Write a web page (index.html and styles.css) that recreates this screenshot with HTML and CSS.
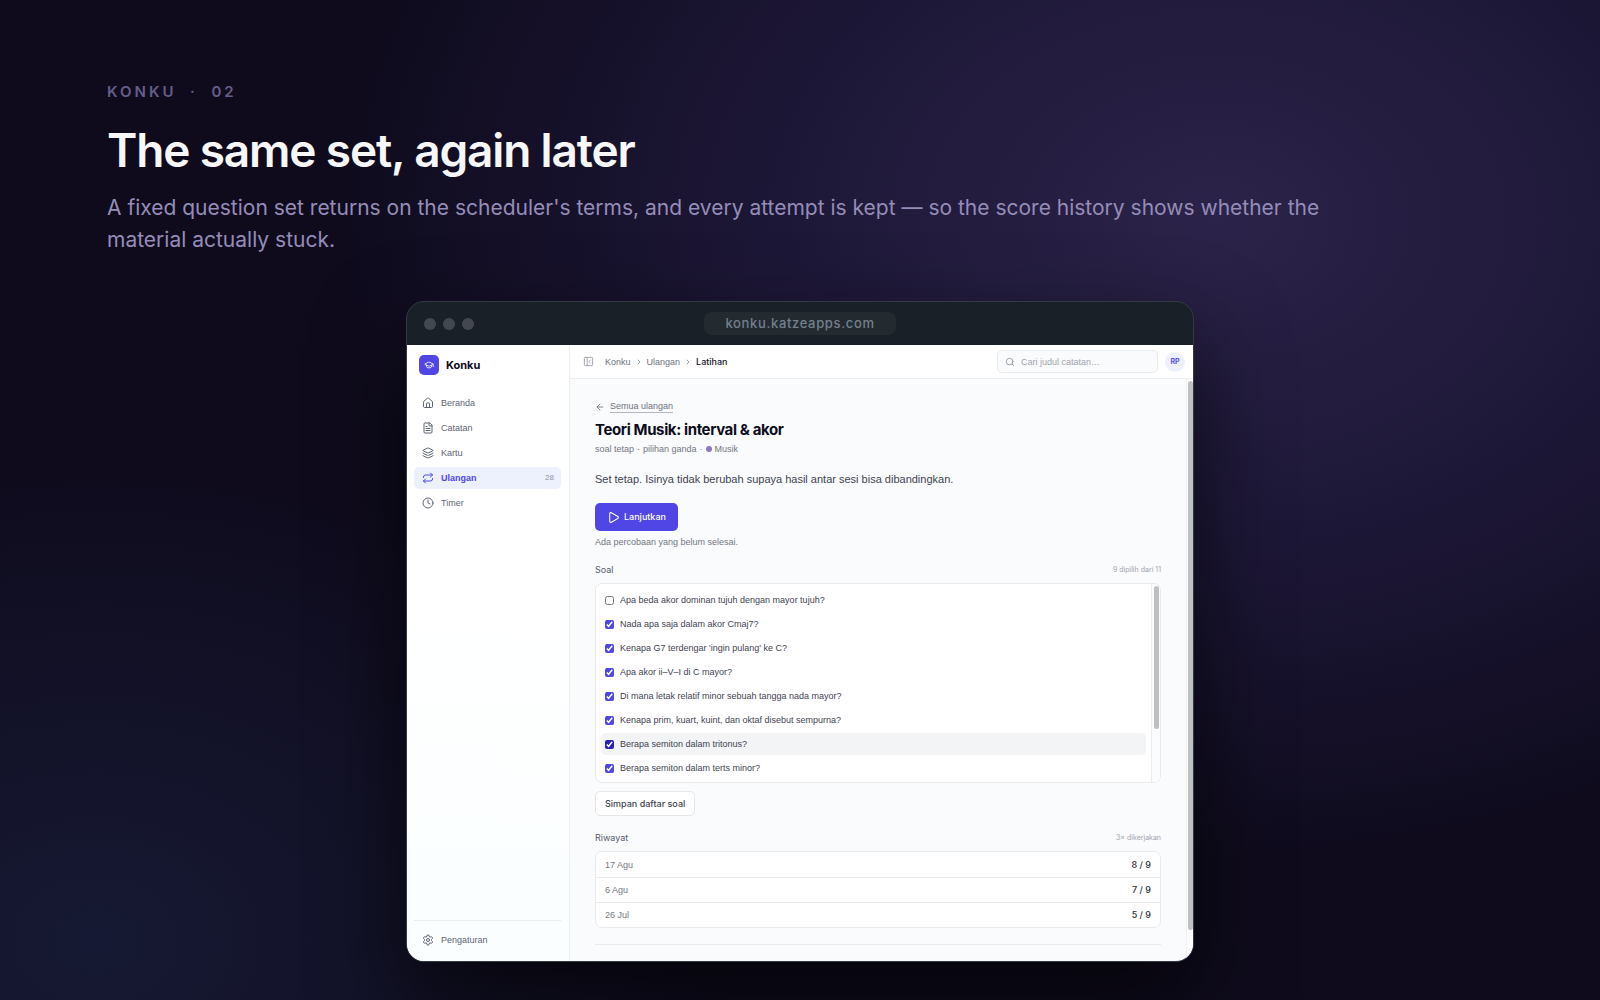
FILE: index.html
```html
<!DOCTYPE html>
<html lang="en">

<head>
    <meta charset="utf-8">
    <title>Konku - The same set, again later</title>
    <link rel="stylesheet" href="styles.css">
</head>

<body>
    <header class="intro">
        <p class="eyebrow">KONKU &nbsp;·&nbsp; 02</p>
        <h1>The same set, again later</h1>
        <p class="lead">A fixed question set returns on the scheduler's terms, and every attempt is kept — so the score history shows whether the material actually stuck.</p>
    </header>

    <div class="window" lang="id">
        <div class="window-bar">
            <div class="dots"><span></span><span></span><span></span></div>
            <div class="address">konku.katzeapps.com</div>
        </div>

        <div class="app">
            <aside class="sidebar">
                <div class="brand">
                    <span class="logo">
                        <svg viewBox="0 0 24 24"><path d="M21.4 10.9a1 1 0 0 0 0-1.8L12.8 5.2a2 2 0 0 0-1.6 0L2.6 9.1a1 1 0 0 0 0 1.8l8.6 3.9a2 2 0 0 0 1.6 0z"/><path d="M22 10v6"/><path d="M6 12.5V16a6 3 0 0 0 12 0v-3.5"/></svg>
                    </span>
                    <strong>Konku</strong>
                </div>
                <nav class="menu">
                    <a href="#">
                        <svg viewBox="0 0 24 24"><path d="M15 21v-8a1 1 0 0 0-1-1h-4a1 1 0 0 0-1 1v8"/><path d="M3 10a2 2 0 0 1 .7-1.5l7-6a2 2 0 0 1 2.6 0l7 6A2 2 0 0 1 21 10v9a2 2 0 0 1-2 2H5a2 2 0 0 1-2-2z"/></svg>
                        Beranda
                    </a>
                    <a href="#">
                        <svg viewBox="0 0 24 24"><path d="M15 2H6a2 2 0 0 0-2 2v16a2 2 0 0 0 2 2h12a2 2 0 0 0 2-2V7z"/><path d="M14 2v4a2 2 0 0 0 2 2h4"/><path d="M10 9H8"/><path d="M16 13H8"/><path d="M16 17H8"/></svg>
                        Catatan
                    </a>
                    <a href="#">
                        <svg viewBox="0 0 24 24"><path d="M12.8 2.2a2 2 0 0 0-1.6 0L2.6 6.1a1 1 0 0 0 0 1.8l8.6 3.9a2 2 0 0 0 1.6 0l8.6-3.9a1 1 0 0 0 0-1.8z"/><path d="M2 12a1 1 0 0 0 .6.9l8.6 3.9a2 2 0 0 0 1.6 0l8.6-3.9a1 1 0 0 0 .6-.9"/><path d="M2 17a1 1 0 0 0 .6.9l8.6 3.9a2 2 0 0 0 1.6 0l8.6-3.9a1 1 0 0 0 .6-.9"/></svg>
                        Kartu
                    </a>
                    <a href="#" class="active">
                        <svg viewBox="0 0 24 24"><path d="m17 2 4 4-4 4"/><path d="M3 11v-1a4 4 0 0 1 4-4h14"/><path d="m7 22-4-4 4-4"/><path d="M21 13v1a4 4 0 0 1-4 4H3"/></svg>
                        Ulangan
                        <span class="count">28</span>
                    </a>
                    <a href="#">
                        <svg viewBox="0 0 24 24"><circle cx="12" cy="12" r="10"/><path d="M12 6v6l4 2"/></svg>
                        Timer
                    </a>
                </nav>
                <div class="menu menu-bottom">
                    <a href="#">
                        <svg viewBox="0 0 24 24"><path d="M9.7 4.1a2.3 2.3 0 0 1 4.6 0 2.3 2.3 0 0 0 3.3 1.9 2.3 2.3 0 0 1 2.3 4 2.3 2.3 0 0 0 0 4 2.3 2.3 0 0 1-2.3 4 2.3 2.3 0 0 0-3.3 1.9 2.3 2.3 0 0 1-4.6 0A2.3 2.3 0 0 0 6.4 18a2.3 2.3 0 0 1-2.3-4 2.3 2.3 0 0 0 0-4 2.3 2.3 0 0 1 2.3-4 2.3 2.3 0 0 0 3.3-1.9"/><circle cx="12" cy="12" r="3"/></svg>
                        Pengaturan
                    </a>
                </div>
            </aside>

            <div class="main">
                <div class="topbar">
                    <button class="toggle" aria-label="Tutup menu">
                        <svg viewBox="0 0 24 24"><rect x="3" y="3" width="18" height="18" rx="2"/><path d="M9 3v18"/><path d="m16 15-3-3 3-3"/></svg>
                    </button>
                    <div class="crumbs">
                        <a href="#">Konku</a>
                        <svg viewBox="0 0 24 24"><path d="m9 18 6-6-6-6"/></svg>
                        <a href="#">Ulangan</a>
                        <svg viewBox="0 0 24 24"><path d="m9 18 6-6-6-6"/></svg>
                        <span>Latihan</span>
                    </div>
                    <label class="search">
                        <svg viewBox="0 0 24 24"><circle cx="11" cy="11" r="8"/><path d="m21 21-4.3-4.3"/></svg>
                        <input type="text" placeholder="Cari judul catatan…" aria-label="Cari judul catatan">
                    </label>
                    <button class="avatar">RP</button>
                </div>

                <div class="scroller">
                    <div class="content">
                        <div class="back">
                            <svg viewBox="0 0 24 24"><path d="m12 19-7-7 7-7"/><path d="M19 12H5"/></svg>
                            <a href="#">Semua ulangan</a>
                        </div>
                        <h2>Teori Musik: interval &amp; akor</h2>
                        <p class="meta">
                            <span>soal tetap</span>
                            <span>·</span>
                            <span>pilihan ganda</span>
                            <span>·</span>
                            <span class="tag">Musik</span>
                        </p>
                        <p class="description">Set tetap. Isinya tidak berubah supaya hasil antar sesi bisa dibandingkan.</p>
                        <button class="primary">
                            <svg viewBox="0 0 24 24"><path d="M5 5a2 2 0 0 1 3-1.7l12 7a2 2 0 0 1 0 3.4l-12 7A2 2 0 0 1 5 19z"/></svg>
                            Lanjutkan
                        </button>
                        <p class="hint">Ada percobaan yang belum selesai.</p>

                        <div class="section-head">
                            <h3>Soal</h3>
                            <span>9 dipilih dari 11</span>
                        </div>
                        <div class="questions">
                            <div class="question-list">
                                <label><input type="checkbox"> Apa beda akor dominan tujuh dengan mayor tujuh?</label>
                                <label><input type="checkbox" checked> Nada apa saja dalam akor Cmaj7?</label>
                                <label><input type="checkbox" checked> Kenapa G7 terdengar 'ingin pulang' ke C?</label>
                                <label><input type="checkbox" checked> Apa akor ii–V–I di C mayor?</label>
                                <label><input type="checkbox" checked> Di mana letak relatif minor sebuah tangga nada mayor?</label>
                                <label><input type="checkbox" checked> Kenapa prim, kuart, kuint, dan oktaf disebut sempurna?</label>
                                <label class="hovered"><input type="checkbox" checked> Berapa semiton dalam tritonus?</label>
                                <label><input type="checkbox" checked> Berapa semiton dalam terts minor?</label>
                            </div>
                            <div class="list-track"><span></span></div>
                        </div>
                        <button class="secondary">Simpan daftar soal</button>

                        <div class="section-head">
                            <h3>Riwayat</h3>
                            <span>3× dikerjakan</span>
                        </div>
                        <table class="history">
                            <tr><td>17 Agu</td><td>8 / 9</td></tr>
                            <tr><td>6 Agu</td><td>7 / 9</td></tr>
                            <tr><td>26 Jul</td><td>5 / 9</td></tr>
                        </table>
                        <hr>
                    </div>
                    <div class="page-track"><span></span></div>
                </div>
            </div>
        </div>
    </div>
</body>

</html>
```
FILE: styles.css
```css
* {
    box-sizing: border-box;
}

body {
    margin: 0;
    min-height: 100vh;
    overflow: hidden;
    font-family: Inter, "Liberation Sans", sans-serif;
    background:
        radial-gradient(ellipse 880px 640px at 76% 22%, #2b2349 0%, #1d1737 50%, transparent 100%),
        radial-gradient(ellipse 640px 480px at 6% 94%, #161933 0%, transparent 100%),
        #0f0b1d;
}

h1,
h2,
h3,
p {
    margin: 0;
}

a {
    color: inherit;
    text-decoration: none;
}

button,
input {
    font: inherit;
    color: inherit;
}

svg {
    flex: none;
    fill: none;
    stroke: currentColor;
    stroke-width: 2;
    stroke-linecap: round;
    stroke-linejoin: round;
}

/* Heading */
.intro {
    padding: 80px 107px 0;
}

.eyebrow {
    font-size: 15px;
    line-height: 24px;
    font-weight: 600;
    letter-spacing: 3px;
    color: #655e88;
}

h1 {
    margin-top: 17px;
    font-size: 46px;
    line-height: 58px;
    font-weight: 600;
    letter-spacing: -0.025em;
    color: #f7f7f9;
}

.lead {
    max-width: 1240px;
    margin-top: 13px;
    font-size: 21px;
    line-height: 32px;
    color: #958db8;
}

/* Browser window */
.window {
    max-width: 788px;
    margin: 45px auto 0;
    border: 1px solid #343a44;
    border-radius: 18px;
    overflow: hidden;
    background: #192027;
    box-shadow: 0 40px 90px rgba(0, 0, 0, 0.65);
}

.window-bar {
    display: grid;
    grid-template-columns: 1fr auto 1fr;
    align-items: center;
    height: 43px;
    padding: 0 17px;
}

.dots {
    display: flex;
    gap: 7px;
}

.dots span {
    width: 12px;
    height: 12px;
    border-radius: 50%;
    background: #434850;
}

.address {
    padding: 0 21px;
    border-radius: 8px;
    font-size: 13px;
    line-height: 23px;
    font-weight: 500;
    letter-spacing: 0.05em;
    color: #74808c;
    background: #232b31;
}

.app {
    display: flex;
    font-family: "Liberation Sans", Inter, sans-serif;
    font-size: 9px;
    line-height: 14px;
    color: #3f4350;
    background: #fafbfc;
}

/* Inter has the medium weights */
.brand,
.crumbs span,
.avatar,
.primary,
.secondary,
.section-head,
.history td:last-child,
h2 {
    font-family: Inter, sans-serif;
}

/* Sidebar */
.sidebar {
    display: flex;
    flex-direction: column;
    width: 163px;
    padding: 10px 8px 10px 7px;
    border-right: 1px solid #eceef0;
    background: linear-gradient(#fff 40%, #fafeff);
}

.brand {
    display: flex;
    align-items: center;
    gap: 7px;
    padding-left: 5px;
    font-size: 11px;
    color: #0c0d1c;
}

.logo {
    display: grid;
    place-items: center;
    width: 20px;
    height: 20px;
    border-radius: 5px;
    color: #fff;
    background: #4f46e5;
}

.logo svg {
    width: 10px;
    height: 10px;
}

.menu {
    display: flex;
    flex-direction: column;
    gap: 3px;
    margin-top: 17px;
    color: #5f6473;
}

.menu a {
    display: flex;
    align-items: center;
    gap: 7px;
    height: 22px;
    padding: 0 7px 0 8px;
    border-radius: 5px;
}

.menu svg {
    width: 12px;
    height: 12px;
}

.menu .active {
    font-weight: 700;
    color: #4f46e5;
    background: #edf1fe;
}

.count {
    margin-left: auto;
    font-size: 8px;
    font-weight: 400;
    color: #8f939f;
}

.menu-bottom {
    margin-top: auto;
    padding-top: 8px;
    border-top: 1px solid #e8eaed;
}

/* Top bar */
.main {
    flex: 1;
    min-width: 0;
}

.topbar {
    display: flex;
    align-items: center;
    height: 34px;
    padding: 0 8px 0 13px;
    border-bottom: 1px solid #eceef0;
    background: #fff;
}

.toggle {
    display: flex;
    padding: 0;
    border: none;
    color: #9a9ea6;
    background: none;
}

.toggle svg {
    width: 11px;
    height: 11px;
}

.crumbs {
    display: flex;
    align-items: center;
    gap: 4px;
    margin-left: 11px;
    color: #6e727d;
}

.crumbs svg {
    width: 8px;
    height: 8px;
}

.crumbs span {
    font-weight: 500;
    color: #14161f;
}

.search {
    display: flex;
    align-items: center;
    gap: 6px;
    width: 161px;
    height: 23px;
    margin-left: auto;
    padding: 0 7px;
    border: 1px solid #e8eaee;
    border-radius: 5px;
    color: #8d919c;
    background: #fafbfc;
}

.search svg {
    width: 10px;
    height: 10px;
}

.search input {
    width: 100%;
    min-width: 0;
    padding: 0;
    border: none;
    outline: none;
    background: none;
}

.search input::placeholder {
    color: #9fa3ad;
}

.avatar {
    width: 20px;
    height: 20px;
    margin-left: 7px;
    padding: 0;
    border: none;
    border-radius: 50%;
    font-size: 7px;
    font-weight: 700;
    color: #5a4fe0;
    background: #eef0fd;
}

/* Page content */
.scroller {
    display: flex;
}

.content {
    flex: 1;
    min-width: 0;
    padding: 21px 25px 16px;
}

.back {
    display: flex;
    align-items: center;
    gap: 5px;
    color: #6e727d;
}

.back svg {
    width: 10px;
    height: 10px;
}

.back a {
    line-height: 12px;
    border-bottom: 1px solid #b4b7bf;
}

h2 {
    margin-top: 7px;
    font-size: 15px;
    line-height: 20px;
    font-weight: 700;
    letter-spacing: -0.025em;
    color: #0c0d1c;
}

.meta {
    display: flex;
    gap: 3px;
    margin-top: 2px;
    color: #737783;
}

.tag {
    display: flex;
    align-items: center;
    gap: 3px;
}

.tag::before {
    content: "";
    width: 6px;
    height: 6px;
    border-radius: 50%;
    background: #8b79bd;
}

.description {
    margin-top: 15px;
    font-size: 11px;
    line-height: 16px;
}

.primary {
    display: flex;
    align-items: center;
    gap: 4px;
    height: 28px;
    margin-top: 16px;
    padding: 0 12px;
    border: none;
    border-radius: 5px;
    font-weight: 500;
    color: #fff;
    background: #4f46e5;
}

.primary svg {
    width: 13px;
    height: 13px;
}

.hint {
    margin-top: 4px;
    color: #737783;
}

.section-head {
    display: flex;
    align-items: center;
    justify-content: space-between;
    margin: 14px 0 6px;
}

.section-head h3 {
    font-size: 9px;
    font-weight: 400;
    color: #565a6c;
}

.section-head span {
    font-size: 7px;
    color: #a0a4ad;
}

.questions {
    display: flex;
    border: 1px solid #e8eaed;
    border-radius: 7px;
    overflow: hidden;
    background: #fff;
}

.question-list {
    flex: 1;
    display: grid;
    gap: 2px;
    padding: 5px 5px 3px;
}

.question-list label {
    display: flex;
    align-items: center;
    gap: 6px;
    height: 22px;
    padding: 0 4px;
    border-radius: 5px;
}

.question-list input {
    width: 9px;
    height: 9px;
    margin: 0;
    accent-color: #4f46e5;
}

.question-list .hovered {
    background: #f3f4f6;
}

.question-list .hovered input {
    accent-color: #2a1fb8;
}

.list-track {
    width: 9px;
    padding: 2px;
    border-left: 1px solid #eceded;
    background: #fcfcfc;
}

.list-track span,
.page-track span {
    display: block;
    border-radius: 3px;
    background: #bfc0c1;
}

.list-track span {
    width: 5px;
    height: 143px;
}

.secondary {
    height: 25px;
    margin: 8px 0 1px;
    padding: 0 9px;
    border: 1px solid #e5e7eb;
    border-radius: 5px;
    font-weight: 500;
    background: #fff;
}

.history {
    width: 100%;
    border: 1px solid #e8eaed;
    border-radius: 7px;
    border-spacing: 0;
    background: #fff;
}

.history td {
    height: 25px;
    padding: 0 9px;
    color: #737783;
}

.history tr + tr td {
    border-top: 1px solid #e8eaed;
}

.history td:last-child {
    text-align: right;
    font-weight: 500;
    color: #2b2e3a;
}

hr {
    margin: 16px 0 0;
    border: none;
    border-top: 1px solid #e8eaed;
}

.page-track {
    width: 7px;
    padding: 2px 0 31px 1px;
    border-left: 1px solid #eef0f1;
    background: #fcfcfc;
}

.page-track span {
    height: 100%;
}
```
